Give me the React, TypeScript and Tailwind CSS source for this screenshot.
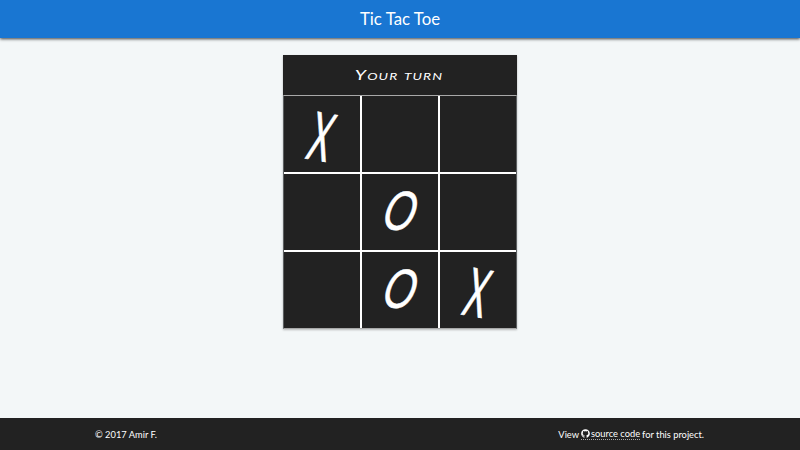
import { FaGithub } from "react-icons/fa";

type Mark = "X" | "O" | "";

const board: Mark[] = ["X", "", "", "", "O", "", "", "O", "X"];

function Cell({ mark }: { mark: Mark }) {
  return (
    <div className="flex items-center justify-center bg-[#222222] text-white">
      {mark === "X" && (
        <span className="translate-y-px rotate-[10deg] -skew-x-[10deg] scale-x-[0.5] font-['Lato'] text-[67px] leading-none [-webkit-text-stroke:0.8px_white]">X</span>
      )}
      {mark === "O" && (
        <span className="-translate-y-[2px] translate-x-px rotate-[12deg] -skew-x-[14deg] scale-x-[0.69] font-['Lato'] text-[56px] leading-none [-webkit-text-stroke:0.5px_white]">O</span>
      )}
    </div>
  );
}

export default function App() {
  return (
    <div className="flex h-[450px] w-[800px] flex-col overflow-hidden bg-[#f3f7f8] font-['Lato',sans-serif] text-white">
      <header className="z-10 flex h-[38px] shrink-0 items-center justify-center bg-[#1976d2] shadow-[0_1px_3px_rgba(0,0,0,0.75)]">
        <h1 className="pt-px text-[16.8px] leading-none">Tic Tac Toe</h1>
      </header>
      <main className="flex grow justify-center pt-[17px]">
        <section className="h-[274px] w-[234px] bg-[#222222] shadow-[0_1px_2px_rgba(0,0,0,0.25)]">
          <div className="flex h-10 items-center justify-center">
            <span className="-translate-x-px scale-x-[1.38] text-[14px] leading-none tracking-[0.8px] whitespace-nowrap italic [font-variant:small-caps]">Your turn</span>
          </div>
          <div className="grid h-[234px] grid-cols-[76px_76px_76px] grid-rows-[76px_76px_76px] gap-[2px] border border-[#a8a8a8] border-x-[#5c6062] bg-white">
            {board.map((mark, i) => (
              <Cell key={i} mark={mark} />
            ))}
          </div>
        </section>
      </main>
      <footer className="flex h-8 shrink-0 items-center justify-between bg-[#222222] pt-px pr-[96px] pl-[95px] text-[9.3px] leading-none">
        <span>© 2017 Amir F.</span>
        <span className="flex items-center">
          View
          <a className="ml-[2px] flex items-center gap-px border-b border-dotted border-[#aaaaaa]">
            <FaGithub className="size-[9px]" />
            source code
          </a>
          <span className="ml-[2px]">for this project.</span>
        </span>
      </footer>
    </div>
  );
}
